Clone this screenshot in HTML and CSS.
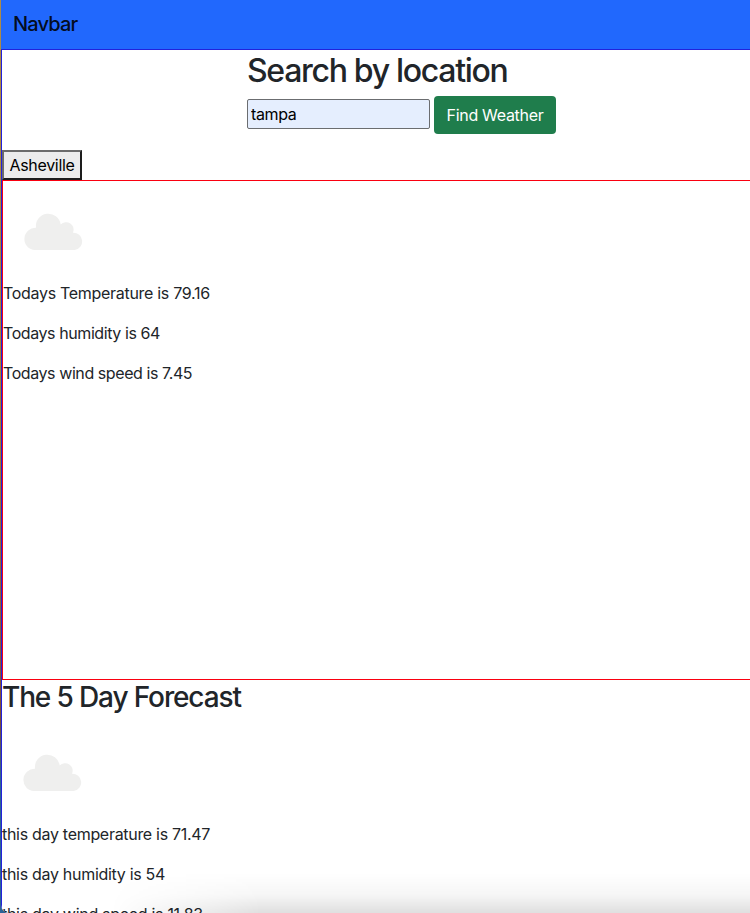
FILE: index.html
```html
<!DOCTYPE html>
<html lang="en">
<head>
<meta charset="utf-8">
<title>Weather</title>
<link rel="stylesheet" href="styles.css">
</head>
<body>
<div class="window">
  <nav class="navbar"><a class="brand">Navbar</a></nav>
  <main class="page">
    <section class="search">
      <h2>Search by location</h2>
      <form class="search-form">
        <input class="city" type="text" value="tampa">
        <button class="find" type="button">Find Weather</button>
      </form>
    </section>
    <button class="history" type="button">Asheville</button>
    <section class="today">
      <svg class="icon" viewBox="0 0 100 100"><path fill="#efefee" d="M32 69A11 11 0 0 1 33 46.800A12.300 12.300 0 1 1 57.700 43.500A7.500 7.500 0 0 1 70 51.700A8.700 8.700 0 0 1 71.700 69Z"/></svg>
      <p class="loose">Todays Temperature is 79.16</p>
      <p class="snug">Todays humidity is 64</p>
      <p class="snug">Todays wind speed is 7.45</p>
    </section>
    <section class="forecast">
      <h3>The 5 Day Forecast</h3>
      <svg class="icon" viewBox="0 0 100 100"><path fill="#efefee" d="M32 69A11 11 0 0 1 33 46.800A12.300 12.300 0 1 1 57.700 43.500A7.500 7.500 0 0 1 70 51.700A8.700 8.700 0 0 1 71.700 69Z"/></svg>
      <p class="loose">this day temperature is 71.47</p>
      <p class="loose">this day humidity is 54</p>
      <p class="loose">this day wind speed is 11.83</p>
    </section>
  </main>
  <div class="shade"></div>
</div>
</body>
</html>
```
FILE: styles.css
```css
* { box-sizing: border-box; }

body {
  margin: 0;
  height: 913px;
  overflow: hidden;
  background: linear-gradient(#ad8b4a 0, #b08a3c 180px, #a5822f 430px, #8c5a3a 660px, #7a4d38 720px, #2f6391 780px, #2b6398 913px);
  color: #212529;
  font: 16px/24px Inter, "Liberation Sans", sans-serif;
  letter-spacing: -0.35px;
}

.window {
  position: relative;
  height: 913px;
  margin-left: 1px;
  overflow: hidden;
  background: #fff;
  border-bottom-left-radius: 8px;
}

.navbar {
  height: 49px;
  padding: 9px 12px;
  background: #2168fd;
}

.brand {
  color: rgba(0, 0, 0, .9);
  font-size: 20px;
  font-weight: 500;
  line-height: 30px;
  letter-spacing: -0.85px;
}

.page {
  height: 900px;
  border: solid #2222dc;
  border-width: 1px 0 0 1px;
}

h2, h3 {
  margin: 0;
  font-weight: 500;
  line-height: 1.2;
}

h2 { padding: 1.5px 0 6.5px; font-size: 32px; letter-spacing: -1.3px; }
h3 { padding: 1px 0 7px; font-size: 28px; letter-spacing: -1.13px; }
p { margin: 0 0 16px; white-space: nowrap; }
.loose { letter-spacing: -0.3px; }
.snug { letter-spacing: -0.42px; }

.search { height: 100px; padding-left: 245px; }

.search-form {
  display: flex;
  align-items: center;
  gap: 4px;
}

.city {
  width: 183px;
  height: 30px;
  margin-bottom: 2px;
  padding: 1px 3px;
  border: 1px solid #6b6d70;
  border-radius: 2px;
  background: #e5eefe;
  color: #000;
  font: inherit;
  letter-spacing: inherit;
}

.find {
  width: 122px;
  height: 38px;
  padding: 0;
  border: 0;
  border-radius: 4px;
  background: #1f7d4c;
  color: #fff;
  font: inherit;
  letter-spacing: -0.3px;
}

.history {
  display: block;
  width: 80px;
  height: 30px;
  padding: 0;
  border: 2px solid;
  border-color: #6b6b6b #1d1d1d #1d1d1d #6b6b6b;
  background: #ececec;
  color: #000;
  font: inherit;
  line-height: 26px;
  letter-spacing: -0.33px;
}

.today {
  height: 500px;
  border: solid #fa0010;
  border-width: 1px 0 1px 1px;
}

.icon { display: block; width: 100px; height: 100px; }

.shade {
  position: absolute;
  left: 110px;
  right: 0;
  bottom: 0;
  height: 40px;
  background: linear-gradient(transparent, rgba(0, 0, 0, .035) 55%, rgba(0, 0, 0, .125));
  -webkit-mask-image: linear-gradient(90deg, transparent, #000 150px);
  mask-image: linear-gradient(90deg, transparent, #000 150px);
}
```
